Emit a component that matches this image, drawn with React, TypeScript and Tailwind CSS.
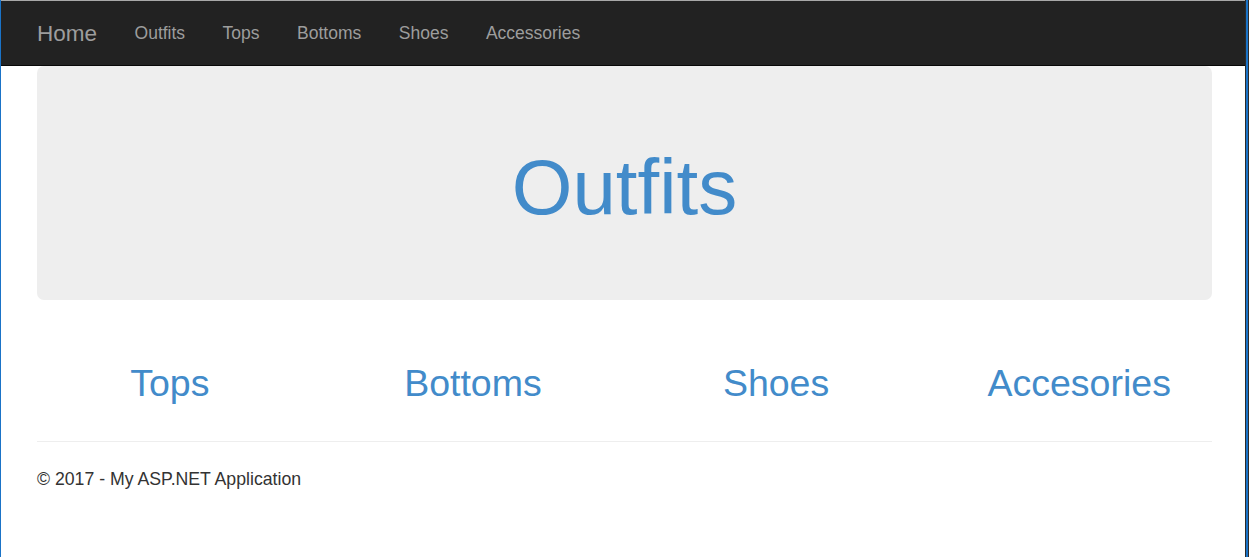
const navLinks = ["Outfits", "Tops", "Bottoms", "Shoes", "Accessories"];
const categories = ["Tops", "Bottoms", "Shoes", "Accesories"];

export default function App() {
  return (
    <div className="flex h-[557px] w-full bg-white font-['Liberation_Sans',Arial,sans-serif] overflow-hidden">
      <div className="w-px shrink-0 bg-[#1a73c7]" />
      <div className="flex min-w-0 flex-1 flex-col">
        <div className="h-px bg-[#a8a8a8]" />
        <nav className="flex h-[65px] items-center border-b border-[#080808] bg-[#222222] pl-[36px] pt-[2px]">
          <a className="pr-[18.75px] pt-[1px] text-[22.5px] leading-none text-[#9d9d9d]">Home</a>
          {navLinks.map((link) => (
            <a key={link} className="px-[18.75px] text-[17.5px] leading-none text-[#9d9d9d]">
              {link}
            </a>
          ))}
        </nav>

        <div className="ml-[36px] w-[1175px]">
          <div className="h-[234px] rounded-[7px] bg-[#eeeeee] pt-[79px] text-center">
            <h1 className="text-[78px] leading-[1.1] text-[#428bca]">Outfits</h1>
          </div>

          <div className="mx-[-18.75px] mt-[63px] grid grid-cols-4">
            {categories.map((cat) => (
              <div key={cat} className="px-[18.75px] text-center">
                <h2 className="text-[37.5px] leading-[1.1] text-[#428bca]">{cat}</h2>
              </div>
            ))}
          </div>

          <hr className="mt-[37px] border-t border-[#eeeeee]" />
          <footer className="mt-[25px]">
            <p className="text-[17.7px] leading-[25px] text-[#333333]">© 2017 - My ASP.NET Application</p>
          </footer>
        </div>
      </div>
      <div className="w-px shrink-0 bg-[#2b2b2b]" />
      <div className="w-[2px] shrink-0 bg-[#1a73c7]" />
      <div className="w-px shrink-0 bg-[#2b2b2b]" />
    </div>
  );
}
